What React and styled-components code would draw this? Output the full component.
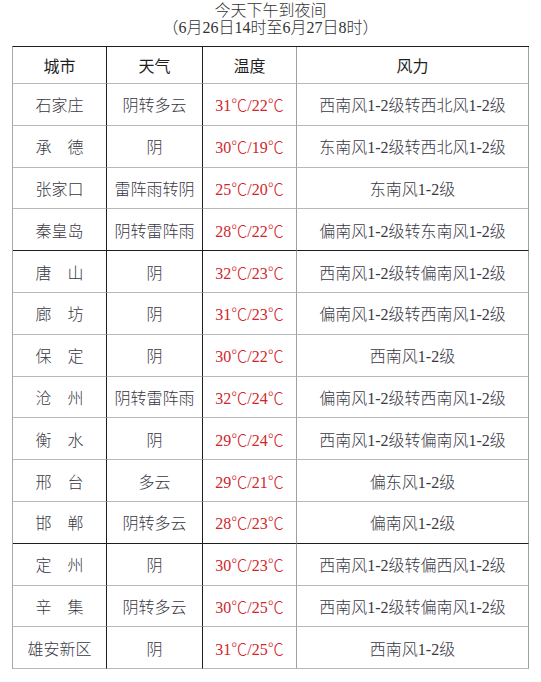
import React from "react";
import styled, { createGlobalStyle } from "styled-components";

const GlobalStyle = createGlobalStyle`
  html, body {
    margin: 0;
    padding: 0;
    background: #fff;
  }
  body {
    font-family: "Liberation Serif", "Noto Sans CJK SC", serif;
  }
`;

const Page = styled.div`
  width: 541px;
  height: 682px;
  padding-top: 2px;
  box-sizing: border-box;
  background: #fff;
`;

const Title = styled.div`
  text-align: center;
  color: #333;
  font-size: 16px;
  line-height: 17px;
  font-weight: 300;
`;

const Grid = styled.div`
  margin: 10px 0 0 12px;
  display: grid;
  grid-template-columns: 94px 96px 94px 232px;
  grid-template-rows: 37px repeat(14, 41.8px);
  border-top: 1px solid #1e1e1e;
  border-left: 1px solid #a8a8a8;
  width: max-content;
`;

// 세로선: 1,2열 오른쪽은 검정, 나머지는 회색
const Cell = styled.div`
  box-sizing: border-box;
  display: flex;
  align-items: center;
  justify-content: center;
  white-space: pre;
  font-size: 16px;
  font-weight: ${(p) => (p.$head ? 400 : 300)};
  color: ${(p) => (p.$red ? "#d0262b" : p.$head ? "#1f1f1f" : "#383844")};
  border-right: 1px solid ${(p) => (p.$darkRight ? "#1e1e1e" : "#a0a0a0")};
  border-bottom: 1px solid ${(p) => (p.$darkBottom ? "#1e1e1e" : "#b8b8b8")};
`;

const rows = [
  ["石家庄", "阴转多云", "31℃/22℃", "西南风1-2级转西北风1-2级"],
  ["承　德", "阴", "30℃/19℃", "东南风1-2级转西北风1-2级"],
  ["张家口", "雷阵雨转阴", "25℃/20℃", "东南风1-2级"],
  ["秦皇岛", "阴转雷阵雨", "28℃/22℃", "偏南风1-2级转东南风1-2级"],
  ["唐　山", "阴", "32℃/23℃", "西南风1-2级转偏南风1-2级"],
  ["廊　坊", "阴", "31℃/23℃", "偏南风1-2级转西南风1-2级"],
  ["保　定", "阴", "30℃/22℃", "西南风1-2级"],
  ["沧　州", "阴转雷阵雨", "32℃/24℃", "偏南风1-2级转西南风1-2级"],
  ["衡　水", "阴", "29℃/24℃", "西南风1-2级转偏南风1-2级"],
  ["邢　台", "多云", "29℃/21℃", "偏东风1-2级"],
  ["邯　郸", "阴转多云", "28℃/23℃", "偏南风1-2级"],
  ["定　州", "阴", "30℃/23℃", "西南风1-2级转偏西风1-2级"],
  ["辛　集", "阴转多云", "30℃/25℃", "西南风1-2级转偏南风1-2级"],
  ["雄安新区", "阴", "31℃/25℃", "西南风1-2级"],
];

// 굵은 가로선이 들어가는 행
const darkAfter = [3, 10];

export default function App() {
  return (
    <Page>
      <GlobalStyle />
      <Title>
        今天下午到夜间
        <br />
        （6月26日14时至6月27日8时）
      </Title>
      <Grid>
        <Cell $head $darkRight>城市</Cell>
        <Cell $head $darkRight>天气</Cell>
        <Cell $head>温度</Cell>
        <Cell $head>风力</Cell>
        {rows.map((r, i) => {
          const dark = darkAfter.includes(i);
          return (
            <React.Fragment key={i}>
              <Cell $darkRight $darkBottom={dark}>{r[0]}</Cell>
              <Cell $darkRight $darkBottom={dark}>{r[1]}</Cell>
              <Cell $red $darkBottom={dark}>{r[2]}</Cell>
              <Cell $darkBottom={dark}>{r[3]}</Cell>
            </React.Fragment>
          );
        })}
      </Grid>
    </Page>
  );
}
